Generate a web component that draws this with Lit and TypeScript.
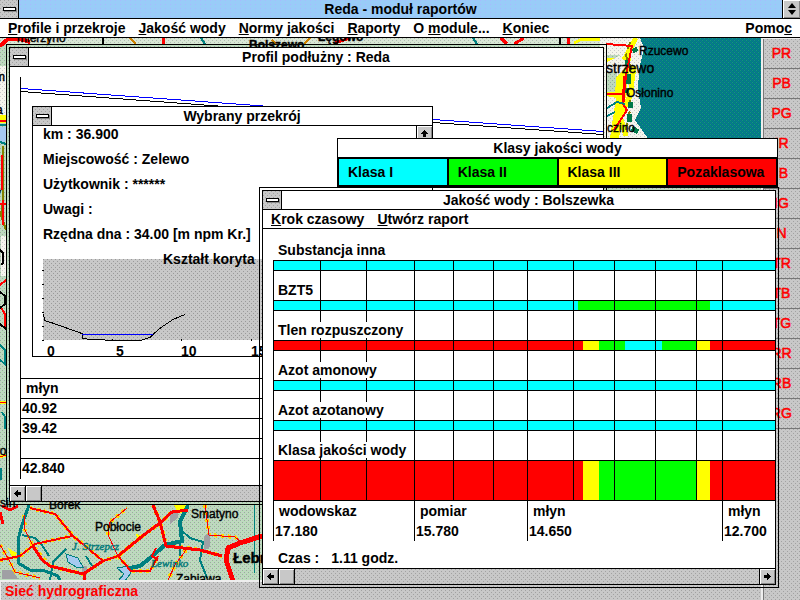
import { LitElement, html, svg, css } from "lit";
import { customElement } from "lit/decorators.js";

type Segment = [end: number, colour: string];

const CYAN = "#00ffff";
const GREEN = "#00ff00";
const YELLOW = "#ffff00";
const RED = "#ff0000";

const CHART_WIDTH = 502;

const PARAMETERS: { name: string; segments: Segment[]; tall?: boolean }[] = [
  { name: "Substancja inna", segments: [[502, CYAN]] },
  { name: "BZT5", segments: [[305, CYAN], [437, GREEN], [502, CYAN]] },
  {
    name: "Tlen rozpuszczony",
    segments: [[310, RED], [326, YELLOW], [352, GREEN], [389, CYAN], [423, GREEN], [437, YELLOW], [502, RED]],
  },
  { name: "Azot amonowy", segments: [[502, CYAN]] },
  { name: "Azot azotanowy", segments: [[502, CYAN]] },
  {
    name: "Klasa jakości wody",
    segments: [[310, RED], [326, YELLOW], [423, GREEN], [437, YELLOW], [502, RED]],
    tall: true,
  },
];

const GRID: { x: number; long?: boolean }[] = [
  { x: 0, long: true }, { x: 47 }, { x: 93 }, { x: 141, long: true }, { x: 180 }, { x: 220 },
  { x: 254, long: true }, { x: 300 }, { x: 341 }, { x: 382 }, { x: 423 }, { x: 449, long: true },
];

const STATIONS = [
  ["wodowskaz", "17.180"], ["pomiar", "15.780"], ["młyn", "14.650"], ["młyn", "12.700"],
];

const TOOLS = ["PR", "PB", "PG", "IR", "IB", "IG", "N", "TR", "TB", "TG", "RR", "RB", "RG"];

const CLASSES: [string, string][] = [
  ["Klasa I", CYAN], ["Klasa II", GREEN], ["Klasa III", YELLOW], ["Pozaklasowa", RED],
];

const arrow = (dir: "left" | "right" | "up") => {
  const turn = { left: 0, up: 90, right: 180 }[dir];
  return html`<svg width="9" height="9" viewBox="0 0 9 9" aria-hidden="true" shape-rendering="crispEdges">
    <path transform="rotate(${turn} 4.5 4.5)" d="M1 4h1v-1h1v-1h1v-1h1v2h3v3h-3v2h-1v-1h-1v-1h-1v-1h-1z" />
  </svg>`;
};

const sysButton = () => html`<button class="sys" aria-label="Menu okna"><span class="dash"></span></button>`;

const mapDrawing = svg`
  <defs>
    <pattern id="land" width="4" height="4" patternUnits="userSpaceOnUse">
      <rect width="4" height="4" fill="#bcdcbc" />
      <path d="M0 0h1v1h-1zM2 2h1v1h-1z" fill="#98ac9c" />
      <path d="M2 0h1v1h-1zM0 2h1v1h-1z" fill="#c8c8cc" />
    </pattern>
    <pattern id="pale" width="4" height="4" patternUnits="userSpaceOnUse">
      <rect width="4" height="4" fill="#f4f4ec" />
      <path d="M0 0h1v1h-1zM2 2h1v1h-1z" fill="#c8c8c8" />
    </pattern>
    <pattern id="sea" width="4" height="4" patternUnits="userSpaceOnUse">
      <rect width="4" height="4" fill="#008080" />
      <path d="M0 0h1v1h-1zM1 1h1v1h-1zM2 2h1v1h-1zM3 3h1v1h-1z" fill="#0f7096" />
      <path d="M2 0h1v1h-1zM0 2h1v1h-1z" fill="#189080" />
    </pattern>
  </defs>
  <g transform="translate(0 -38)" shape-rendering="crispEdges" fill="none">
    <rect y="38" width="800" height="562" fill="url(#land)" />

    <path d="M0 38h600v6H0z" fill="url(#pale)" opacity=".5" />
    <path d="M0 46L8 39H20L30 42" stroke="#f00" stroke-width="4" />
    <path d="M48 38v6M130 38l6 6M272 40l4 4M310 38l-6 6" stroke="#cc8000" stroke-width="2" />
    <path d="M103 38v6M560 38v6" stroke="#000" stroke-width="2" />
    <path d="M163 38v6M335 43l15-5M501 38l6 6M514 44l10-6M568 38v6" stroke="#f00" stroke-width="3" />
    <path d="M201 38l4 6M473 38l4 6" stroke="#008080" stroke-width="2" />
    <path d="M574 43l8-4h24l12 3" stroke="#ff0" stroke-width="3" />

    <path d="M0 66h6v50H0z" fill="url(#pale)" />
    <path d="M0 115h6v8H0z" fill="#ff0" />
    <path d="M0 121h6" stroke="#f00" stroke-width="2" />
    <path d="M0 127h6v14l-6 2z" fill="#a6caf0" />
    <path d="M0 125h6M0 142l6 2" stroke="#008080" stroke-width="2" />
    <path d="M3 146V200L1 215L6 230" stroke="#808000" stroke-width="2" />
    <path d="M2 155V190M0 204H6M3 200V225M6 280l-6 5M0 306l5 8v14" stroke="#f00" stroke-width="2" />
    <path d="M1 236h5v40H1z" fill="url(#pale)" />
    <path d="M0 250l3 3v10l-2 2M0 292l5 4v8l-5 4M0 324l6 5" stroke="#000" stroke-width="2" />
    <path d="M0 345l5 5v14l-5-4M2 412l3 5v12M1 468v12" stroke="#008080" stroke-width="2" />
    <path d="M0 402h6M0 457l6-2" stroke="#ff0" stroke-width="3" />
    <path d="M0 402h6M0 457l6-2" stroke="#f00" />

    <g stroke="#ffd800" stroke-width="4" stroke-dasharray="3 4">
      <path d="M30 508L55 514L73 536L103 561L118 556L140 538L160 523L172 512H188" />
      <path d="M0 560L20 556L35 544L72 536M153 505L160 522L166 545L200 550L222 556" />
      <path d="M24 515L25 530L33 546L50 566L83 574L103 561M205 505L209 535L235 537L242 543" />
      <path d="M0 545L8 558L15 572L40 578M118 556L131 571H150L158 556M186 550L175 565L168 580" />
      <path d="M108 535L110 522L127 508" />
    </g>
    <path d="M2 570h10l6 9H2zM170 512l8 0v6l-8 6zM204 536l6-3v14l-6 4zM82 566h5v7h-5z" fill="#a0a0a4" />
    <path d="M136 534l8 2-6 4zM174 505h12v8h-8zM8 548l9 5-4 6z" fill="#ff0" />
    <path d="M29 505L22 525L18 540V563L30 570L45 571L58 576L60 581" stroke="#008080" stroke-width="3" />
    <path d="M188 505L180 522L182 541L165 545L150 558L140 566L130 568" stroke="#008080" stroke-width="4" />
    <path d="M22 535L35 538L42 545L49 556M50 580L53 562L66 549M181 530L190 538L203 542L200 560L207 578M180 542V556M86 556L92 566" stroke="#008080" stroke-width="2" />
    <path d="M254 505V573" stroke="#008080" />
    <path d="M66 554L78 558L83 567H76L68 562Z" fill="#a6caf0" stroke="#008080" />
    <path d="M117 568L129 566L131 573L125 581H118L124 574Z" fill="#a6caf0" stroke="#008080" />
    <g stroke="#f00">
      <path stroke-width="2" d="M30 508L55 514L73 536L103 561L118 556" />
      <path stroke-width="3" d="M118 556L140 538L160 523L172 512L188 510M153 505L160 522L166 546L200 550L222 556" />
      <path d="M24 515L25 530L33 546M118 556L108 535L110 522L127 508M205 505L209 535L235 537L242 543M186 550L175 565L168 580M0 545L8 558L15 572L40 578" />
      <path stroke-width="2" d="M0 560L20 556L35 544L72 536M118 556L131 571H150L158 556" />
      <path stroke-width="3" d="M33 546L42 560L50 566L83 574L103 561M84 572V581M2 506l8 4 8-4M0 512l3 12" />
      <path stroke-width="5" d="M262 536L240 543L228 548L226 560L233 581" />
    </g>
    <path d="M156 548l-4 8 6 4" stroke="#f00" stroke-width="2" />

    <path d="M600 38h161v102H600z" fill="url(#sea)" />
    <path d="M600 38h40l4 10-5 22-1 20 3 18-6 12 7 10 7 10h-49z" fill="url(#pale)" />
    <path d="M606 55h20l-4 20-4 20h-12z" fill="url(#land)" />
    <path d="M607 58l24-1-6 45-6 36h-9l6-40-9-2z" fill="#ff0" />
    <path d="M607 62l20-10v14l-12 12h-8z" fill="url(#pale)" />
    <path d="M607 72h10l-2 20h-8z" fill="url(#land)" />
    <path d="M624 60l12-22M626 136l-6-20 10-20 4-30" stroke="#ff0" stroke-width="5" />
    <path d="M630 42l-4 14 5 12-4 18 4 20-6 26" stroke="#808000" stroke-width="2" stroke-dasharray="7 5" />
    <path d="M634 48l2 4M627 60v6M628 74v10M626 88v5M630 102v6M629 114v8M632 128l6 4" stroke="#007848" stroke-width="5" />
    <path d="M606 44L632 46L626 75L624 95L623 104L627 110L614 130M606 94H624" stroke="#f00" stroke-width="2" />
    <path d="M625 76L623 102" stroke="#f00" stroke-width="3" />
    <path d="M607 108l10-6 8 2M607 116l8-4" stroke="#008080" stroke-width="2" />
  </g>
  <g transform="translate(0 -38)" class="map-text">
    <text x="17" y="42">mierzyno</text>
    <text x="318" y="41" class="strong">Łęgowo</text>
    <text x="249" y="49" class="strong">Bolszewo</text>
    <text x="639" y="55">Rzucewo</text>
    <text x="606" y="73" class="village">strzewo</text>
    <text x="626" y="97">Osłonino</text>
    <text x="607" y="132">czino</text>
    <text x="-5" y="81">m</text>
    <text x="-4" y="114">a</text>
    <text x="-5" y="197">y</text>
    <text x="-9" y="455">wo</text>
    <text x="0" y="507">sin</text>
    <text x="49" y="509">Borek</text>
    <text x="95" y="531">Pobłocie</text>
    <text x="191" y="518">Smatyno</text>
    <text x="233" y="563" class="town">Łebno</text>
    <text x="176" y="583">Zabiawa</text>
    <text x="72" y="550" class="water">J. Strzepcz</text>
    <text x="151" y="567" class="water">Lewinko</text>
  </g>
`;

@customElement("app-root")
export class AppRoot extends LitElement {
  static styles = css`
    :host {
      --dots: conic-gradient(from 0deg at 1px 1px, transparent 75%, #a2a2a2 0);
      --dither: var(--dots) 0 0 / 4px 4px, var(--dots) 2px 2px / 4px 4px, #c8c8c8;
      display: flex;
      flex-direction: column;
      height: 100vh;
      min-height: 600px;
      overflow: hidden;
      background: #fff;
      color: #000;
      font: bold 14px/18px "Liberation Sans", Arial, sans-serif;
      white-space: nowrap;
    }
    * { box-sizing: border-box; }
    button {
      margin: 0;
      padding: 0;
      border: 0;
      background: none;
      color: inherit;
      font: inherit;
    }
    h1, h2 { margin: 0; flex: 1; font: inherit; text-align: center; }
    svg { display: block; }

    .titlebar { display: flex; height: 19px; flex: none; border-bottom: 1px solid #000; background: #fff; }
    .titlebar.main {
      background:
        conic-gradient(from 0deg at 1px 1px, transparent 75%, #a8b8ff 0) 0 0 / 5px 4px,
        #99ccf8;
    }
    .sys {
      display: grid;
      place-items: center;
      width: 19px;
      border-right: 1px solid #000;
      background: var(--dither);
    }
    .dash { width: 13px; height: 4px; border: 1px solid #000; background: #fff; box-shadow: 1px 1px #888; }
    .restore {
      display: grid;
      place-items: center;
      width: 18px;
      border-left: 1px solid #000;
      background: #c8c8c8;
      box-shadow: inset 1px 1px #fff, inset -1px -1px #888;
    }
    .menu { display: flex; gap: 13px; height: 19px; flex: none; padding: 0 8px; border-bottom: 1px solid #000; background: #fff; }
    .menu .help { margin-left: auto; }

    .workspace { position: relative; display: flex; flex: 1; }
    .column { display: flex; flex-direction: column; flex: 1; min-width: 0; }
    .map { position: relative; flex: 1; overflow: hidden; }
    .map > svg { position: absolute; inset: 0; width: 100%; height: 100%; }
    .map-text text { font: 12px "Liberation Sans", Arial, sans-serif; fill: #000; stroke: #000; stroke-width: 0.4px; }
    .map-text .strong { font-weight: bold; }
    .map-text .village { font-size: 14px; }
    .map-text .town { font-size: 15px; font-weight: bold; }
    .map-text .water { font: italic 11px "Liberation Serif", serif; fill: #007878; stroke: #007878; }
    .status {
      height: 20px;
      flex: none;
      padding: 0 4px;
      border-top: 2px solid #eee;
      border-left: 1px solid #eee;
      background: var(--dither);
      color: #f00;
      line-height: 19px;
    }
    .tools {
      display: flex;
      flex-direction: column;
      width: 39px;
      flex: none;
      border-top: 1px solid #eee;
      border-left: 2px solid #eee;
      background: var(--dither);
      box-shadow: inset 1px 0 #777;
    }
    .tools button {
      height: 30px;
      padding-bottom: 2px;
      border-bottom: 1px solid #777;
      color: #f00;
      font-weight: normal;
      -webkit-text-stroke: 0.5px #f00;
    }

    .window {
      position: absolute;
      border: 1px solid #000;
      padding: 2px;
      background:
        linear-gradient(#000, #000) 21px 0 / 1px 100% no-repeat,
        linear-gradient(#000, #000) right 21px top 0 / 1px 100% no-repeat,
        linear-gradient(#000, #000) 0 21px / 100% 1px no-repeat,
        linear-gradient(#000, #000) 0 bottom 21px / 100% 1px no-repeat,
        #c8c8c8;
    }
    .client { border: 1px solid #000; background: #fff; }
    .profile-window { left: 6px; top: 6px; width: 601px; }
    .legend-window { left: 337px; top: 100px; width: 441px; border: 1px solid #000; position: absolute; background: #fff; }
    .quality-window { left: 259px; top: 149px; width: 520px; }

    .pane { position: relative; margin: 10px 0 6px 10px; border-left: 1px solid #000; }
    .long-profile { width: 100%; height: 301px; }
    .points { width: 100%; border-collapse: collapse; }
    .points td { height: 20px; padding: 0 1px; border-top: 1px solid #000; line-height: 19px; }
    .points .kind { padding-left: 5px; }

    .scroll { display: flex; height: 16px; border-top: 1px solid #000; background: var(--dither); }
    .scroll button, .up {
      display: grid;
      place-items: center;
      width: 16px;
      height: 15px;
      border-right: 1px solid #000;
      background: #c8c8c8;
      box-shadow: inset 1px 1px #fff, inset -1px -1px #888;
    }
    .scroll .end { margin-left: auto; border-right: 0; border-left: 1px solid #000; }

    .section-window { position: absolute; left: 11px; top: 29px; width: 401px; border: 1px solid #000; background: #fff; }
    .section-body { display: flex; justify-content: space-between; }
    .up { border-right: 0; border-left: 1px solid #000; }
    .facts { display: flex; flex-direction: column; gap: 8px; padding-left: 10px; line-height: 17px; flex: 1; min-width: 0; }
    .facts p { margin: 0; }
    .facts svg { width: 100%; height: 105px; font: inherit; overflow: visible; }

    .classes { display: grid; grid-template-columns: repeat(4, 1fr); gap: 2px; padding: 1px 1px 2px; background: #000; }
    .classes span { padding: 0 9px; line-height: 26px; }

    .chart { position: relative; margin-left: 10px; padding-top: 2px; }
    .row { padding-top: 11px; line-height: 16px; }
    .name { position: relative; z-index: 2; display: table; height: 16px; margin: 0 0 2px 4px; padding: 0 1px; background: #fff; }
    .bar { display: flex; height: 11px; border: solid #000; border-width: 1px 0; }
    .bar.tall { height: 41px; }
    .segment { height: 100%; }
    .gridline { position: absolute; z-index: 1; top: 31px; bottom: 40px; width: 1px; background: #000; }
    .gridline.long { bottom: 0; }
    .stations { display: grid; grid-template-columns: 141px 113px 195px 1fr; line-height: 20px; }
    .stations div { padding-left: 2px; }
    .stations .kind { display: block; padding-left: 4px; }
    .time { display: flex; gap: 12px; margin: 9px 0 2px 15px; line-height: 16px; }
  `;

  private scrollbar(end = false) {
    return html`<div class="scroll">
      <button aria-label="W lewo">${arrow("left")}</button>
      <button aria-label="Suwak"></button>
      ${end ? html`<button class="end" aria-label="W prawo">${arrow("right")}</button>` : null}
    </div>`;
  }

  private profileWindow() {
    return html`<section class="window profile-window">
      <div class="client">
        <header class="titlebar">${sysButton()}<h2>Profil podłużny : Reda</h2></header>
        <div class="pane">
          <svg class="long-profile" viewBox="0 0 582 301" preserveAspectRatio="none" shape-rendering="crispEdges" fill="none">
            <path d="M0 11.5L236 28.5L412 42.5L582 54.5" stroke="#00f" />
            <path d="M0 14.5L190 28.5L412 45.5L582 57.5" stroke="#000" />
          </svg>
          <table class="points" aria-label="Punkty profilu">
            <tr><td class="kind">młyn</td></tr>
            <tr><td>40.92</td></tr>
            <tr><td>39.42</td></tr>
            <tr><td></td></tr>
            <tr><td>42.840</td></tr>
          </table>
          ${this.sectionWindow()}
        </div>
        ${this.scrollbar()}
      </div>
    </section>`;
  }

  private sectionWindow() {
    return html`<section class="section-window">
      <header class="titlebar">${sysButton()}<h2>Wybrany przekrój</h2></header>
      <div class="section-body">
        <div class="facts">
          <p>km : 36.900</p>
          <p>Miejscowość : Zelewo</p>
          <p>Użytkownik : ******</p>
          <p>Uwagi :</p>
          <p>Rzędna dna : 34.00 [m npm Kr.]</p>
          <svg fill="none">
            <defs>
              <pattern id="dots" width="4" height="4" patternUnits="userSpaceOnUse">
                <path d="M0 0h4v4h-4z" fill="#c8c8c8" />
                <path d="M0 0h1v1h-1zM2 2h1v1h-1z" fill="#9a9a9a" />
              </pattern>
            </defs>
            <g shape-rendering="crispEdges" stroke="#000">
              <path d="M0 8h370v81h-370z" fill="url(#dots)" stroke="none" />
              <path d="M-1 19.5h2M-1 33.5h2M-1 47.5h2M-1 61.5h2M-1 75.5h2M-1 89.5h2M69.5 88v2M138.5 88v2M208.5 88v2" />
              <path d="M.5 63L1.5 69.5L8 71.5L39 82.5L40 87.5L48 88.5L75 89.5H97L107 86.5L111 82.5L118 76.5L130 68.5L142 63.5" />
              <path d="M39 83.5H110" stroke="#00f" />
            </g>
            <g fill="#000">
              <text x="120" y="13">Kształt koryta</text>
              <text x="4" y="105">0</text>
              <text x="73" y="105">5</text>
              <text x="138" y="105">10</text>
              <text x="208" y="105">15</text>
            </g>
          </svg>
        </div>
        <button class="up" aria-label="W górę">${arrow("up")}</button>
      </div>
    </section>`;
  }

  private legendWindow() {
    return html`<section class="legend-window">
      <header class="titlebar"><h2>Klasy jakości wody</h2></header>
      <div class="classes">
        ${CLASSES.map(([name, colour]) => html`<span style="background:${colour}">${name}</span>`)}
      </div>
    </section>`;
  }

  private qualityWindow() {
    return html`<section class="window quality-window">
      <div class="client">
        <header class="titlebar">${sysButton()}<h2>Jakość wody : Bolszewka</h2></header>
        <nav class="menu">
          <button><u>K</u>rok czasowy</button>
          <button><u>U</u>twórz raport</button>
        </nav>
        <div class="chart">
          ${PARAMETERS.map(
            (p) => html`<div class="row">
              <span class="name">${p.name}</span>
              <div class="bar ${p.tall ? "tall" : ""}">
                ${p.segments.map(([end, colour], i) => {
                  const start = i ? p.segments[i - 1][0] : 0;
                  return html`<div
                    class="segment"
                    style="width:${((end - start) / CHART_WIDTH) * 100}%;background:${colour}"
                  ></div>`;
                })}
              </div>
            </div>`
          )}
          <div class="stations">
            ${STATIONS.map(([kind, km]) => html`<div><span class="kind">${kind}</span>${km}</div>`)}
          </div>
          ${GRID.map((g) => html`<i class="gridline ${g.long ? "long" : ""}" style="left:${g.x}px"></i>`)}
        </div>
        <div class="time"><span>Czas :</span><span>1.11 godz.</span></div>
        ${this.scrollbar(true)}
      </div>
    </section>`;
  }

  render() {
    return html`
      <header class="titlebar main">
        ${sysButton()}
        <h1>Reda - moduł raportów</h1>
        <button class="restore" aria-label="Przywróć">
          <svg width="8" height="12" viewBox="0 0 8 12"><path d="M4 0l4 5H0zM4 12l4-5H0z" /></svg>
        </button>
      </header>
      <nav class="menu">
        <button><u>P</u>rofile i przekroje</button>
        <button><u>J</u>akość wody</button>
        <button><u>N</u>ormy jakości</button>
        <button><u>R</u>aporty</button>
        <button>O <u>m</u>odule...</button>
        <button><u>K</u>oniec</button>
        <button class="help">Pomo<u>c</u></button>
      </nav>
      <main class="workspace">
        <div class="column">
          <div class="map"><svg aria-label="Mapa">${mapDrawing}</svg></div>
          <footer class="status">Sieć hydrograficzna</footer>
        </div>
        <aside class="tools">${TOOLS.map((t) => html`<button>${t}</button>`)}</aside>
        ${this.profileWindow()} ${this.legendWindow()} ${this.qualityWindow()}
      </main>
    `;
  }
}
